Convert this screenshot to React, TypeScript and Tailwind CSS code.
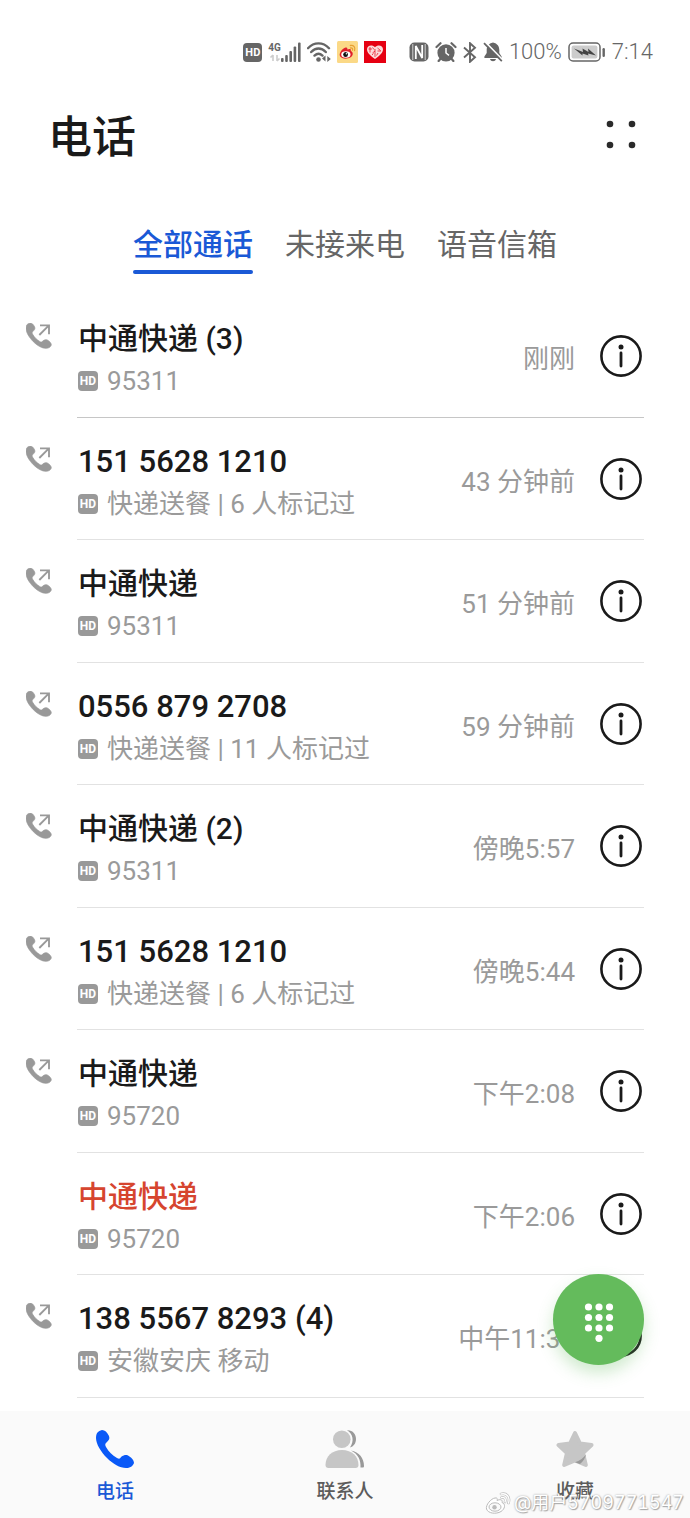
import type { ReactNode } from "react";

interface Call {
  id: number;
  title: string;
  detail: string;
  time: string;
  missed?: boolean;
}

const calls: Call[] = [
  { id: 1, title: "中通快递 (3)", detail: "95311", time: "刚刚" },
  { id: 2, title: "151 5628 1210", detail: "快递送餐 | 6 人标记过", time: "43 分钟前" },
  { id: 3, title: "中通快递", detail: "95311", time: "51 分钟前" },
  { id: 4, title: "0556 879 2708", detail: "快递送餐 | 11 人标记过", time: "59 分钟前" },
  { id: 5, title: "中通快递 (2)", detail: "95311", time: "傍晚5:57" },
  { id: 6, title: "151 5628 1210", detail: "快递送餐 | 6 人标记过", time: "傍晚5:44" },
  { id: 7, title: "中通快递", detail: "95720", time: "下午2:08" },
  { id: 8, title: "中通快递", detail: "95720", time: "下午2:06", missed: true },
  { id: 9, title: "138 5567 8293 (4)", detail: "安徽安庆 移动", time: "中午11:39" },
];

const HANDSET =
  "M6 0C9 0 11 2 13 6C14 9 13 10 10 13C9 14 9 15 10 17C13 22 16 25 21 28C23 29 24 29 25 27C28 25 30 24.5 32 25.5C35 27 38 30 38 33C37 36 34 38 30 38C24 38 17 34 11 28C5 22 0 14 0 8C0 3 2 1 6 0Z";

const OutgoingIcon = () => (
  <svg width="26" height="26" viewBox="0 0 39 39" aria-hidden="true">
    <path d={HANDSET} fill="#999" stroke="#999" strokeWidth="1" />
    <path d="M20 18L34 4M21 3.5H34.5V17" fill="none" stroke="#999" strokeWidth="2.8" />
  </svg>
);

const InfoIcon = () => (
  <svg width="42" height="42" viewBox="0 0 42 42" aria-hidden="true">
    <circle cx="21" cy="21" r="19.6" fill="none" stroke="#1a1a1a" strokeWidth="2.6" />
    <circle cx="21" cy="12" r="2.5" fill="#1a1a1a" />
    <path d="M21 18V31" stroke="#1a1a1a" strokeWidth="2.8" strokeLinecap="round" />
  </svg>
);

const HdBadge = () => (
  <span className="flex h-5 w-5 shrink-0 items-center justify-center rounded bg-[#999] text-[12px] leading-none font-bold text-white">
    HD
  </span>
);

const StatusBar = () => (
  <div className="flex items-center justify-end gap-[6px] pt-9 pr-[37px] text-[#666]">
    <span className="flex h-[19px] w-[19px] items-center justify-center rounded bg-[#666] text-[11px] leading-none font-bold text-white">
      HD
    </span>
    <div className="flex items-end">
      <div className="flex flex-col items-center">
        <span className="text-[10px] leading-3 font-bold">4G</span>
        <svg width="12" height="8" viewBox="0 0 12 8" aria-hidden="true">
          <path d="M4 1V7M1.5 3.5L4 1M8 1V7M10.5 4.5L8 7" fill="none" stroke="#ccc" strokeWidth="1.6" />
        </svg>
      </div>
      <svg width="20" height="20" viewBox="0 0 20 20" fill="currentColor" aria-hidden="true">
        <rect x="0" y="16" width="2.6" height="4" rx="1" />
        <rect x="4.2" y="13" width="2.6" height="7" rx="1" />
        <rect x="8.4" y="9" width="2.6" height="11" rx="1" />
        <rect x="12.6" y="4.5" width="2.6" height="15.5" rx="1" />
        <rect x="17" y="0.5" width="2.6" height="19.5" rx="1" />
      </svg>
    </div>
    <svg width="24" height="20" viewBox="0 0 24 20" fill="none" stroke="currentColor" aria-hidden="true">
      <path d="M1 6.2C7 -0.2 16 -0.2 22 6.2M4.2 10C8.5 5.4 14.5 5.4 18.8 10M7.5 13.6C10 11.2 13 11.2 15.5 13.6" strokeWidth="2.4" strokeLinecap="round" />
      <circle cx="11.5" cy="17.5" r="2.3" fill="currentColor" stroke="none" />
      <path d="M18.5 13.5V19.5L15 16.5ZM20.3 20V14L23.8 17Z" fill="currentColor" stroke="none" />
    </svg>
    <svg width="21" height="22" viewBox="0 0 22 22" preserveAspectRatio="none" aria-hidden="true">
      <rect width="22" height="22" rx="1.5" fill="#fbd987" />
      <path d="M9 6.5C11 6 11 7.5 10.8 8.6C13 7.5 15.2 7.8 14.4 10C17.6 11.3 17 15 13.8 16.6C10.5 18.4 5 18.2 3.2 15.3C1.5 12.2 5.8 7.4 9 6.5Z" fill="#e0202a" />
      <ellipse cx="9.3" cy="13.5" rx="4.8" ry="3.3" fill="#fff" />
      <circle cx="9" cy="13.6" r="2.5" fill="#111" />
      <circle cx="9.8" cy="12.8" r="0.7" fill="#fff" />
      <path d="M14 4.5C17.6 4 19.5 6.4 18.4 9.6M14.2 7C16 6.8 16.8 7.8 16.2 9.2" fill="none" stroke="#e8a033" strokeWidth="1.3" strokeLinecap="round" />
    </svg>
    <svg width="22" height="22" viewBox="0 0 22 22" aria-hidden="true">
      <rect width="22" height="22" fill="#e60012" />
      <path d="M11 18C6 14.5 3 11.5 3 8.2C3 4 8.5 3.2 11 6.3C13.5 3.2 19 4 19 8.2C19 11.5 16 14.5 11 18Z" fill="#fbdada" />
      <path d="M4.5 8H8M6 6V11.5M8.5 6.5L10 8.5M11 8V16M8.5 12L11 10M13.5 7L16.5 9.5M13.5 10H17M14 12L12.5 14.5M8 14L9.5 12.5" fill="none" stroke="#e60012" strokeWidth="0.7" />
    </svg>

    <svg className="ml-[17px]" width="20" height="20" viewBox="0 0 20 20" aria-hidden="true">
      <rect x="0.5" y="0.5" width="19" height="19" rx="5" fill="#666" />
      <path d="M6.8 17V4L13.2 16V3" fill="none" stroke="#fff" strokeWidth="1.8" />
      <path d="M3.8 2V18M16.2 2V18" stroke="#fff" strokeWidth="0.7" />
    </svg>
    <svg width="22" height="20" viewBox="0 0 22 20" aria-hidden="true">
      <circle cx="11" cy="10.8" r="8.6" fill="#666" />
      <path d="M1.5 5L5.5 1.2M20.5 5L16.5 1.2M5.3 17L3.6 19M16.7 17L18.4 19" stroke="#666" strokeWidth="2.2" strokeLinecap="round" />
      <path d="M11 6V11L14 13.3" fill="none" stroke="#fff" strokeWidth="1.5" />
    </svg>
    <svg width="14" height="21" viewBox="0 0 14 21" fill="none" stroke="currentColor" strokeWidth="1.9" aria-hidden="true">
      <path d="M1 5.5L12 15.2L7 19.8V1.2L12 5.8L1 15.5" />
    </svg>
    <svg width="20" height="20" viewBox="0 0 20 20" aria-hidden="true">
      <path d="M10 0.5C14.5 1.5 16.3 4.5 16.3 8V11L18.6 14.5V16H1.4V14.5L3.7 11V8C3.7 4.5 5.5 1.5 10 0.5Z" fill="#666" />
      <path d="M7 17H13C12.3 20 7.7 20 7 17Z" fill="#666" />
      <path d="M2.2 0L20 18.2" stroke="#fff" strokeWidth="1.8" />
      <path d="M1 1.2L18.8 19.2" stroke="#666" strokeWidth="1.8" />
    </svg>
    <span className="text-[22px] leading-8 font-light">100%</span>
    <svg width="38" height="20" viewBox="0 0 38 20" fill="none" aria-hidden="true">
      <rect x="1" y="1" width="31" height="18" rx="4" stroke="#666" strokeWidth="1.5" />
      <rect x="3.6" y="3.6" width="25.8" height="12.8" rx="2" fill="#ccc" />
      <path d="M6 6.5L15 10L14.5 6.5L20.5 10L20 6.5L28 13.5L20 11.5L20.5 13.5L14.5 11.5V13.5Z" fill="#444" />
      <rect x="34.5" y="6" width="2.4" height="9" rx="1.2" fill="#666" />
    </svg>
    <span className="text-[22px] leading-8 font-light">7:14</span>
  </div>
);

const CallItem = ({ call }: { call: Call }) => {
  const isNumber = /^\d/.test(call.title);

  return (
    <li className="group flex pr-[46px] pl-[26px]">
      <div className="w-[51px] shrink-0 pt-7">{!call.missed && <OutgoingIcon />}</div>
      <div className="flex min-w-0 flex-1 items-center border-b border-[#e2e2e2] pr-[2px] group-first:border-[#c6c6c6]">
        <div className="min-w-0 flex-1 pt-6 pb-[17px] pl-px group-odd:pb-[18px]">
          <h2
            className={`leading-10 font-medium whitespace-nowrap ${isNumber ? "text-[31px]" : "text-[30px]"} ${
              call.missed ? "text-[#d6452f]" : "text-[#1a1a1a]"
            }`}
          >
            {call.title}
          </h2>
          <p className="mt-1 flex items-center gap-[9px] text-[26px] leading-9 whitespace-nowrap text-[#9a9a9a]">
            <HdBadge />
            {call.detail}
          </p>
        </div>
        <span className="pt-1.5 text-[26px] leading-9 whitespace-nowrap text-[#9a9a9a]">{call.time}</span>
        <button type="button" aria-label="详情" className="ml-[25px] shrink-0">
          <InfoIcon />
        </button>
      </div>
    </li>
  );
};

const NavItem = ({ label, active, children }: { label: string; active?: boolean; children: ReactNode }) => (
  <a
    href="#"
    className={`flex flex-1 flex-col items-center pt-[19px] text-[19px] leading-7 font-medium ${
      active ? "text-[#1a59d6]" : "text-[#5c5c5c]"
    }`}
  >
    {children}
    <span className="mt-[10px]">{label}</span>
  </a>
);

const App = () => {
  return (
    <div className="relative flex min-h-screen flex-col bg-white font-[Roboto,'Noto_Sans_CJK_SC',sans-serif]">
      <StatusBar />

      <header className="flex h-[136px] items-center justify-between pr-[50px] pl-12">
        <h1 className="pt-1 text-[44px] leading-[64px] font-medium text-[#1a1a1a]">电话</h1>
        <button type="button" aria-label="更多">
          <svg width="36" height="36" viewBox="0 0 36 36" fill="#2a2a2a" aria-hidden="true">
            <circle cx="6" cy="6" r="3.3" />
            <circle cx="28" cy="6" r="3.3" />
            <circle cx="6" cy="27" r="3.3" />
            <circle cx="28" cy="27" r="3.3" />
          </svg>
        </button>
      </header>

      {/* Tabs */}
      <div className="flex justify-center gap-8 pt-[19px] text-[30px] leading-[44px]">
        <button type="button" className="relative pb-[7px] font-medium text-[#1a59d6]">
          全部通话
          <span className="absolute inset-x-0 bottom-0 h-1 rounded-full bg-[#1a59d6]" />
        </button>
        <button type="button" className="pb-[7px] text-[#666]">未接来电</button>
        <button type="button" className="pb-[7px] text-[#666]">语音信箱</button>
      </div>

      <ul className="mt-[21px] flex-1">
        {calls.map((call) => (
          <CallItem key={call.id} call={call} />
        ))}
      </ul>

      {/* Bottom bar */}
      <nav className="relative flex h-[107px] bg-[#fafafa]">
        <NavItem label="电话" active>
          <svg width="38" height="38" viewBox="0 0 38 38" aria-hidden="true">
            <path d={HANDSET} fill="#0a59f7" />
          </svg>
        </NavItem>
        <NavItem label="联系人">
          <svg width="40" height="38" viewBox="0 0 40 38" aria-hidden="true">
            <path d="M22 0.3C28 0 31 4.5 31 9C31 13.5 28.5 16.5 25 17.5C29.5 11 28 4 22 0.3Z" fill="#999" />
            <path d="M26 20.5C34 22 39 28 39 36C39 37 38.5 37.5 37.5 37.5H35.5C36 30 33 24 26 20.5Z" fill="#999" />
            <circle cx="16.8" cy="9.2" r="8.8" fill="#c6c6c6" />
            <path d="M17 20C27 20 33.5 26.5 33.5 35C33.5 37 32.5 38 30.5 38H3.5C1.5 38 0.5 37 0.5 35C0.5 26.5 7 20 17 20Z" fill="#c6c6c6" />
          </svg>
        </NavItem>
        <NavItem label="收藏">
          <svg width="38" height="38" viewBox="0 0 38 38" aria-hidden="true">
            <path
              d="M19 3L24 13.5L35.5 15L27 23L29.8 35L19 30.5L8.2 35L11 23L2.5 15L14 13.5Z"
              fill="#c6c6c6"
              stroke="#c6c6c6"
              strokeWidth="4"
              strokeLinejoin="round"
            />
            <path d="M30 24.5C27.5 28 23.5 31 19 32.2L24 34C27 31.5 29.3 28 30 24.5Z" fill="#999" />
          </svg>
        </NavItem>

        <div className="absolute right-[6px] bottom-[3px] flex items-center gap-[3px] font-['Inter','Noto_Sans_CJK_SC',sans-serif] text-[18px] leading-6 whitespace-nowrap text-white tabular-nums [text-shadow:0_0_2px_#999,1px_1px_1px_#aaa]">
          <svg width="26" height="24" viewBox="0 0 26 24" fill="none" aria-hidden="true">
            <path d="M10 7C12.5 6.5 12.5 8 12 9.5C15 8 18 8.5 17 11.5C21 13 20 18 16 20.5C11 23.5 3 22.5 1.5 18C0.5 14 6 7.5 10 7Z" fill="#fff" stroke="#bbb" />
            <ellipse cx="10" cy="16" rx="6" ry="4.2" fill="#fafafa" stroke="#bbb" />
            <circle cx="9.5" cy="16.3" r="2.2" fill="#bbb" />
            <path d="M16 3C21.5 1.5 25.5 6 23.5 12M16.5 6.5C19.5 6 21 8 20 11" stroke="#bbb" strokeWidth="2.6" strokeLinecap="round" />
            <path d="M16 3C21.5 1.5 25.5 6 23.5 12M16.5 6.5C19.5 6 21 8 20 11" stroke="#fff" strokeWidth="1.4" strokeLinecap="round" />
          </svg>
          <span>@用户5709771547</span>
        </div>
      </nav>

      {/* Dial pad button */}
      <button
        type="button"
        aria-label="拨号"
        className="absolute right-[46px] bottom-[153px] flex h-[91px] w-[91px] items-center justify-center rounded-full bg-[#64bb5c] shadow-[0_8px_16px_rgba(100,187,92,0.3)]"
      >
        <svg className="mt-1" width="30" height="40" viewBox="0 0 30 40" fill="#fff" aria-hidden="true">
          {[5, 15.5, 26].map((y) =>
            [4.5, 15, 25.5].map((x) => <circle key={`${x}-${y}`} cx={x} cy={y} r="3.6" />)
          )}
          <circle cx="15" cy="36.3" r="3.6" />
        </svg>
      </button>
    </div>
  );
};

export default App;
